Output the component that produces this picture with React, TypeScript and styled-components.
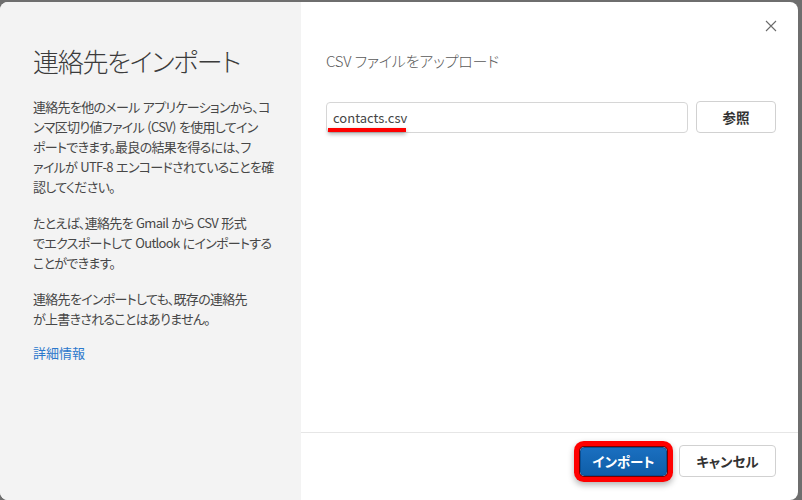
import React from "react";
import styled, { createGlobalStyle } from "styled-components";

const GlobalStyle = createGlobalStyle`
    html, body {
        margin: 0;
        padding: 0;
        background-color: #6e6e6e;
    }
    body {
        font-family: "Noto Sans CJK JP", "Noto Sans", sans-serif;
        font-feature-settings: "palt";
        color: #424242;
    }
`

const Frame = styled.div`
    box-sizing: border-box;
    width: 802px;
    height: 500px;
    padding: 2px 4px 0 0;
`

const Dialog = styled.div`
    display: flex;
    height: 498px;
    border-radius: 8px;
    overflow: hidden;
    background-color: #ffffff;
`

const Side = styled.aside`
    box-sizing: border-box;
    width: 301px;
    flex-shrink: 0;
    padding: 41px 16px 0 33px;
    background-color: #f3f3f3;
`

const Title = styled.h1`
    margin: 0 0 18px;
    font-size: 26px;
    line-height: 36px;
    font-weight: 300;
    color: #3b3b3b;
    letter-spacing: -1.3px;
`

const Paragraph = styled.p`
    margin: 0 0 16px;
    font-size: 13px;
    line-height: 20px;
    letter-spacing: -0.7px;
    word-spacing: 1px;
    white-space: nowrap;
    color: #474747;
`

const Link = styled.a`
    display: block;
    margin-top: -2px;
    font-size: 13px;
    line-height: 20px;
    color: #2b78cc;
    text-decoration: none;
    cursor: pointer;
`

const Main = styled.section`
    flex: 1;
    display: flex;
    flex-direction: column;
`

const Content = styled.div`
    flex: 1;
    padding: 12px 22px 0 25px;
`

const Header = styled.div`
    display: flex;
    justify-content: flex-end;
`

const CloseButton = styled.button`
    width: 24px;
    height: 24px;
    margin-right: -7px;
    padding: 0;
    border: none;
    background: none;
    display: flex;
    align-items: center;
    justify-content: center;
    cursor: pointer;
`

const Heading = styled.h2`
    margin: 11px 0 28px;
    font-size: 15px;
    line-height: 24px;
    font-weight: 300;
    letter-spacing: -0.2px;
    color: #5a5a5a;
`

const UploadRow = styled.div`
    display: flex;
    align-items: center;
    gap: 8px;
`

const FileField = styled.div`
    position: relative;
    flex: 1;
`

const FileInput = styled.input`
    box-sizing: border-box;
    width: 100%;
    height: 31px;
    padding: 0 6px;
    border: 1px solid #d6d6d6;
    border-radius: 4px;
    font-family: "Noto Sans CJK JP", "Noto Sans", sans-serif;
    font-size: 13px;
    font-weight: 400;
    color: #454545;
    background: #ffffff;
    outline: none;
`

const Underline = styled.span`
    position: absolute;
    left: 2px;
    top: 26px;
    width: 78px;
    height: 4px;
    background-color: #ff0000;
    box-shadow: 0 2px 4px rgba(0, 0, 0, 0.35);
`

const Button = styled.button<{ $primary?: boolean; $width: number }>`
    box-sizing: border-box;
    width: ${p => p.$width}px;
    height: ${p => (p.$primary ? 29 : 32)}px;
    border-radius: 4px;
    font-family: "Noto Sans CJK JP", "Noto Sans", sans-serif;
    font-feature-settings: "palt";
    font-size: 13.5px;
    font-weight: 700;
    cursor: pointer;
    border: 1px solid ${p => (p.$primary ? "#0b4f93" : "#d1d1d1")};
    color: ${p => (p.$primary ? "#ffffff" : "#333333")};
    background: ${p => (p.$primary ? "linear-gradient(#1a6fc0, #0f5ea8)" : "#ffffff")};
`

const HighlightedButton = styled(Button)`
    box-shadow: 0 0 0 1px #7a0000, 0 0 0 6px #ff0000, 0 3px 6px 6px rgba(0, 0, 0, 0.3);
`

const Footer = styled.footer`
    box-sizing: border-box;
    height: 68px;
    border-top: 1px solid #e6e6e6;
    padding: 12px 22px 0 0;
    display: flex;
    justify-content: flex-end;
    align-items: flex-start;
`

const FooterRow = styled.div`
    display: flex;
    align-items: center;
    gap: 12px;
    height: 32px;
`

const CloseIcon = () => (
    <svg width="12" height="12" viewBox="0 0 12 12">
        <path d="M1 1 L11 11 M11 1 L1 11" stroke="#6b6b6b" strokeWidth="1.1" fill="none" />
    </svg>
)

const App = () => {
    return (
        <>
            <GlobalStyle />
            <Frame>
                <Dialog>
                    <Side>
                        <Title>連絡先をインポート</Title>
                        <Paragraph>
                            連絡先を他のメール アプリケーションから、コ<br />
                            ンマ区切り値ファイル (CSV) を使用してイン<br />
                            ポートできます。最良の結果を得るには、フ<br />
                            ァイルが UTF-8 エンコードされていることを確<br />
                            認してください。
                        </Paragraph>
                        <Paragraph>
                            たとえば、連絡先を Gmail から CSV 形式<br />
                            でエクスポートして Outlook にインポートする<br />
                            ことができます。
                        </Paragraph>
                        <Paragraph>
                            連絡先をインポートしても、既存の連絡先<br />
                            が上書きされることはありません。
                        </Paragraph>
                        <Link>詳細情報</Link>
                    </Side>
                    <Main>
                        <Content>
                            <Header>
                                <CloseButton aria-label="閉じる">
                                    <CloseIcon />
                                </CloseButton>
                            </Header>
                            <Heading>CSV ファイルをアップロード</Heading>
                            <UploadRow>
                                <FileField>
                                    <FileInput type="text" value="contacts.csv" readOnly />
                                    <Underline />
                                </FileField>
                                <Button $width={80}>参照</Button>
                            </UploadRow>
                        </Content>
                        <Footer>
                            <FooterRow>
                                <HighlightedButton $primary $width={87}>インポート</HighlightedButton>
                                <Button $width={97}>キャンセル</Button>
                            </FooterRow>
                        </Footer>
                    </Main>
                </Dialog>
            </Frame>
        </>
    )
}

export default App;
